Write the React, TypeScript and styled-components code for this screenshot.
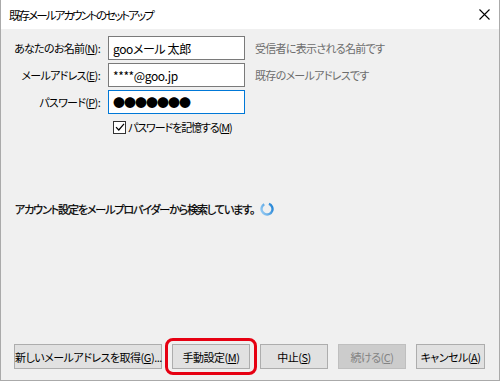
import React from 'react';
import styled, { createGlobalStyle } from 'styled-components';

const GlobalStyle = createGlobalStyle`
  html, body {
    margin: 0;
    padding: 0;
    background: #ffffff;
  }
  body {
    font-family: 'Noto Sans CJK JP', 'Noto Sans', sans-serif;
    font-size: 11px;
    font-feature-settings: 'palt';
    color: #000000;
  }
`;

type Field = {
  label: string;
  key: string;
  value: string;
  hint?: string;
  focused?: boolean;
  secret?: boolean;
};

const fields: Field[] = [
  { label: 'あなたのお名前', key: 'N', value: 'gooメール 太郎', hint: '受信者に表示される名前です' },
  { label: 'メールアドレス', key: 'E', value: '****@goo.jp', hint: '既存のメールアドレスです' },
  { label: 'パスワード', key: 'P', value: '●●●●●●●', focused: true, secret: true },
];

type ButtonDef = {
  label: string;
  key: string;
  tail?: string;
  width: number;
  disabled?: boolean;
  marked?: boolean;
};

const buttons: ButtonDef[] = [
  { label: '新しいメールアドレスを取得', key: 'G', tail: '...', width: 148 },
  { label: '手動設定', key: 'M', width: 78, marked: true },
  { label: '中止', key: 'S', width: 68 },
  { label: '続ける', key: 'C', width: 68, disabled: true },
  { label: 'キャンセル', key: 'A', width: 69 },
];

const App = () => {
  return (
    <>
      <GlobalStyle />
      <Window>
        <TitleBar>
          <Title>既存メールアカウントのセットアップ</Title>
          <CloseButton>
            <svg width="11" height="11" viewBox="0 0 11 11">
              <path d="M0.5 0.5 L10.5 10.5 M10.5 0.5 L0.5 10.5" stroke="#000" strokeWidth="1.1" />
            </svg>
          </CloseButton>
        </TitleBar>
        <Body>
          <Form>
            {fields.map((f) => (
              <React.Fragment key={f.key}>
                <Label>
                  {f.label}(<u>{f.key}</u>):
                </Label>
                <Input $focused={f.focused} $secret={f.secret}>
                  {f.value}
                </Input>
                <Hint>{f.hint}</Hint>
              </React.Fragment>
            ))}
            <span />
            <CheckRow>
              <CheckBox>
                <svg width="10" height="10" viewBox="0 0 10 10">
                  <path d="M1 5.2 L3.8 8 L9 1.8" stroke="#000" strokeWidth="1.2" fill="none" />
                </svg>
              </CheckBox>
              <CheckText>
                パスワードを記憶する(<u>M</u>)
              </CheckText>
            </CheckRow>
          </Form>
          <Status>
            <StatusText>アカウント設定をメールプロバイダーから検索しています。</StatusText>
            <Spinner viewBox="0 0 14 14" width="14" height="14">
              <defs>
                <linearGradient id="spin" x1="0" y1="0" x2="1" y2="1">
                  <stop offset="0" stopColor="#9fd0f5" />
                  <stop offset="1" stopColor="#1a7fd4" />
                </linearGradient>
              </defs>
              <circle
                cx="7"
                cy="7"
                r="5.5"
                fill="none"
                stroke="url(#spin)"
                strokeWidth="2.4"
                strokeDasharray="29 6"
                transform="rotate(-70 7 7)"
              />
            </Spinner>
          </Status>
          <ButtonRow>
            {buttons.map((b) => (
              <ButtonSlot key={b.key}>
                <Button $width={b.width} disabled={b.disabled}>
                  {b.label}(<u>{b.key}</u>){b.tail}
                </Button>
                {b.marked && <Marker />}
              </ButtonSlot>
            ))}
          </ButtonRow>
        </Body>
      </Window>
    </>
  );
};
export default App;

const Window = styled.div`
  width: 500px;
  height: 381px;
  box-sizing: border-box;
  border: 1px solid #aaaaaa;
  border-top: none;
  display: flex;
  flex-direction: column;
  background: #f0f0f0;
`;

const TitleBar = styled.div`
  height: 29px;
  flex: none;
  background: #ffffff;
  display: flex;
  align-items: center;
  justify-content: space-between;
  padding: 0 9px 0 8px;
`;

const Title = styled.span`
  font-size: 11.5px;
  letter-spacing: -1.9px;
  color: #000000;
`;

const CloseButton = styled.span`
  display: flex;
  align-items: center;
`;

const Body = styled.div`
  flex: 1;
  display: flex;
  flex-direction: column;
  padding: 7px 0 11px 0;
`;

const Form = styled.div`
  display: grid;
  grid-template-columns: 92px 137px auto;
  column-gap: 8px;
  row-gap: 3px;
  padding-left: 7px;
  align-items: center;
`;

const Label = styled.span`
  text-align: right;
  white-space: nowrap;
  letter-spacing: -0.7px;
`;

const Input = styled.div<{ $focused?: boolean; $secret?: boolean }>`
  height: 24px;
  box-sizing: border-box;
  background: #ffffff;
  border: 1px solid ${(p) => (p.$focused ? '#0078d7' : '#7a7a7a')};
  padding: 0 4px;
  display: flex;
  align-items: center;
  font-size: 12px;
  letter-spacing: ${(p) => (p.$secret ? '-1px' : '-0.4px')};
  white-space: nowrap;
  overflow: hidden;
`;

const Hint = styled.span`
  margin-left: 2px;
  color: #6d6d6d;
  white-space: nowrap;
  letter-spacing: -0.7px;
`;

const CheckRow = styled.label`
  grid-column: 2 / span 2;
  display: flex;
  align-items: center;
  gap: 2px;
  padding-left: 5px;
  margin-top: 2px;
`;

const CheckBox = styled.span`
  width: 11px;
  height: 11px;
  border: 1px solid #333333;
  background: #ffffff;
  display: flex;
  align-items: center;
  justify-content: center;
`;

const CheckText = styled.span`
  letter-spacing: -1.1px;
`;

const Status = styled.div`
  margin-top: 66px;
  padding-left: 14px;
  display: flex;
  align-items: center;
  gap: 6px;
`;

const StatusText = styled.span`
  letter-spacing: -1.1px;
  -webkit-text-stroke: 0.25px #000;
`;

const Spinner = styled.svg`
  display: block;
`;

const ButtonRow = styled.div`
  margin-top: auto;
  display: flex;
  gap: 10px;
  padding-left: 13px;
`;

const ButtonSlot = styled.div`
  position: relative;
`;

const Button = styled.button<{ $width: number }>`
  width: ${(p) => p.$width}px;
  height: 25px;
  box-sizing: border-box;
  padding: 0;
  border: 1px solid #adadad;
  background: #e1e1e1;
  font-family: inherit;
  font-size: 11px;
  font-feature-settings: 'palt';
  letter-spacing: -0.5px;
  color: #000000;
  white-space: nowrap;

  &:disabled {
    background: #cccccc;
    border-color: #bfbfbf;
    color: #838383;
  }
`;

const Marker = styled.span`
  position: absolute;
  top: -6px;
  bottom: -6px;
  left: -7px;
  right: -7px;
  border: 3px solid #e60012;
  border-radius: 8px;
  pointer-events: none;
`;
